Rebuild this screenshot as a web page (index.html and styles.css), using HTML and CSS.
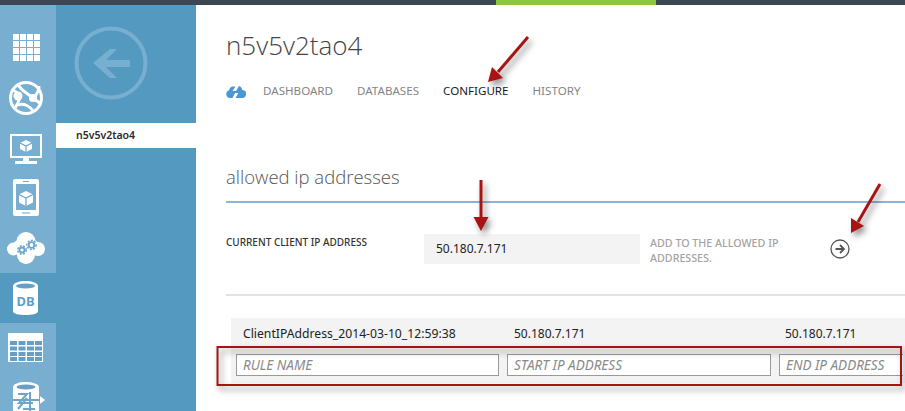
FILE: index.html
```html
<!DOCTYPE html>
<html lang="en">
<head>
<meta charset="utf-8">
<title>n5v5v2tao4 - Configure</title>
<link rel="stylesheet" href="styles.css">
</head>
<body>
<div class="topbar"><div class="topbar-accent"></div></div>
<div class="shell">
  <nav class="rail">
    <div class="rail-item">
      <svg class="rail-icon" viewBox="0 0 56 50"><path class="w" d="M13 12h6v6h-6zM20 12h6v6h-6zM27 12h6v6h-6zM34 12h6v6h-6zM13 19h6v6h-6zM20 19h6v6h-6zM27 19h6v6h-6zM34 19h6v6h-6zM13 26h6v6h-6zM20 26h6v6h-6zM27 26h6v6h-6zM34 26h6v6h-6zM13 33h6v6h-6zM20 33h6v6h-6zM27 33h6v6h-6zM34 33h6v6h-6z"/></svg>
    </div>
    <div class="rail-item">
      <svg class="rail-icon" viewBox="0 0 56 50"><circle class="s" cx="26" cy="26" r="15.500" stroke-width="3"/><path class="s" stroke-width="3" d="M18 12c2 6 9 9 15 14l8 6M13 18c6 3 7 6 6 10s-3 6-4 8M18 33c6-2 12 1 16 7M34 26c3-4 5-7 5-12"/><circle class="w" cx="18" cy="24" r="4.500"/><circle class="w" cx="33" cy="26" r="4"/></svg>
    </div>
    <div class="rail-item">
      <svg class="rail-icon" viewBox="0 0 56 50"><rect class="s" x="11" y="13" width="30" height="22" stroke-width="2"/><path class="w" d="M23 36h6v3h8v3H15v-3h8z"/><path class="w" d="M26 18l6 3v6l-6 3-6-3v-6z"/><path class="s-blue" d="M20 21l6 3 6-3M26 24v6"/></svg>
    </div>
    <div class="rail-item">
      <svg class="rail-icon" viewBox="0 0 56 50"><path class="w" fill-rule="evenodd" d="M15 7h22a2 2 0 0 1 2 2v33a2 2 0 0 1-2 2H15a2 2 0 0 1-2-2V9a2 2 0 0 1 2-2zM16 12v26h20V12z"/><path class="w" d="M26 19l7 3.500v8l-7 3.500-7-3.500v-8z"/><path class="s-blue" d="M19 22.500l7 3.500 7-3.500M26 26v8M22 41h8M23 9.500h6"/></svg>
    </div>
    <div class="rail-item">
      <svg class="rail-icon" viewBox="0 0 56 50"><circle class="w" cx="13.500" cy="27" r="6.500"/><circle class="w" cx="26" cy="19.500" r="9.500"/><circle class="w" cx="38" cy="27" r="7"/><circle class="w" cx="26" cy="33" r="9"/><circle class="w" cx="19" cy="24" r="6"/><circle class="w" cx="33" cy="24" r="6"/><circle class="gear-ring" cx="22" cy="28" r="2.500"/><circle class="gear" cx="22" cy="28" r="4.200"/><circle class="gear-ring" cx="31.500" cy="23" r="2.800"/><circle class="gear" cx="31.500" cy="23" r="4.600"/></svg>
    </div>
    <div class="rail-item rail-item-active">
      <svg class="rail-icon" viewBox="0 0 56 50"><path class="w" d="M13 13c0-3 6-5 12.500-5S38 10 38 13v25c0 3-6 4-12.500 4S13 41 13 38z"/><ellipse class="b" cx="25.500" cy="13" rx="9.500" ry="2.500"/><text class="db" x="25.500" y="33">DB</text></svg>
    </div>
    <div class="rail-item">
      <svg class="rail-icon" viewBox="0 0 56 50"><path class="w" d="M8 10h35v29H8z"/><path class="b" d="M10 18h7v4h-7zM18.500 18h7v4h-7zM27 18h7v4h-7zM35 18h7v4h-7zM10 23.500h7v4h-7zM18.500 23.500h7v4h-7zM27 23.500h7v4h-7zM35 23.500h7v4h-7zM10 29h7v4h-7zM18.500 29h7v4h-7zM27 29h7v4h-7zM35 29h7v4h-7zM10 34h7v4h-7zM18.500 34h7v4h-7zM27 34h7v4h-7zM35 34h7v4h-7z"/></svg>
    </div>
    <div class="rail-item">
      <svg class="rail-icon" viewBox="0 0 56 50"><path class="w" d="M13 14c0-3 6-5 12.500-5S39 11 39 14v28H13z"/><ellipse class="b" cx="26" cy="14" rx="9.500" ry="2.500"/><path class="s-blue s-thick" d="M13 27h29M18 21h9l-8 9h14M18 36l9-11M30 19v23M23 36h12"/><path class="w" d="M40 23l5 4-5 4z"/></svg>
    </div>
  </nav>

  <aside class="subnav">
    <div class="back">
      <svg class="back-icon" viewBox="0 0 76 76"><circle cx="38" cy="38" r="34.500" fill="none" stroke-width="4"/><path class="back-arrow" d="M20 38L37 24h7L33 35h24v7H33l11 11h-7z"/></svg>
    </div>
    <div class="subnav-item">n5v5v2tao4</div>
  </aside>

  <main class="content">
    <h1 class="title">n5v5v2tao4</h1>
    <div class="tabs">
      <svg class="tab-icon" viewBox="0 0 20 13"><path d="M4 13a4 4 0 0 1-1-7.800C3.500 3 5 1.500 7 1.500h2.500L6.500 6H10l-3.500 7zM9.500 13l3-5H9l4-7c2 .5 3 2 3.200 4A4 4 0 0 1 16 13z"/></svg>
      <span class="tab">DASHBOARD</span>
      <span class="tab">DATABASES</span>
      <span class="tab tab-active">CONFIGURE</span>
      <span class="tab">HISTORY</span>
    </div>

    <h2 class="section">allowed ip addresses</h2>

    <div class="client-row">
      <div class="client-label">CURRENT CLIENT IP ADDRESS</div>
      <div class="client-ip">50.180.7.171</div>
      <div class="client-note">ADD TO THE ALLOWED IP ADDRESSES.</div>
      <svg class="add-icon" viewBox="0 0 20 20"><circle cx="10" cy="10" r="9" fill="none" stroke-width="1.300"/><path d="M5.500 10h8M10 6l4 4-4 4" fill="none" stroke-width="1.800"/></svg>
    </div>

    <div class="rules">
      <div class="rule-row">
        <span class="cell-name">ClientIPAddress_2014-03-10_12:59:38</span>
        <span class="cell-start">50.180.7.171</span>
        <span class="cell-end">50.180.7.171</span>
      </div>
      <div class="rule-inputs">
        <div class="field field-name">RULE NAME</div>
        <div class="field field-start">START IP ADDRESS</div>
        <div class="field field-end">END IP ADDRESS</div>
      </div>
    </div>
  </main>
</div>

<svg class="marks" viewBox="0 0 905 411">
  <g class="mark-group">
    <rect class="mark-box" x="217.500" y="347" width="683.500" height="38"/>
    <path class="mark-line" d="M528 37L498 72"/>
    <path class="mark-fill" d="M488 82L492 67L503 78z"/>
    <path class="mark-line" d="M481 180V220"/>
    <path class="mark-fill" d="M481 231L473.500 217H488.500z"/>
    <path class="mark-line" d="M880 184L858 222"/>
    <path class="mark-fill" d="M851 233L851 218L864 226z"/>
  </g>
</svg>
</body>
</html>
```
FILE: styles.css
```css
* { box-sizing: border-box; margin: 0; padding: 0; }
html, body { width: 905px; height: 411px; overflow: hidden; }
body {
  position: relative;
  background: #fff;
  font-family: "Noto Sans", "Open Sans", "Liberation Sans", sans-serif;
  color: #222;
  display: flex;
  flex-direction: column;
}
.topbar { height: 5px; background: #3d4753; flex: none; padding-left: 496px; }
.topbar-accent { width: 160px; height: 5px; background: #8cc63f; }
.shell { display: flex; flex: 1; min-height: 0; }

.rail { width: 56px; flex: none; background: #78afd1; padding-top: 17px; overflow: hidden; }
.rail-item { height: 50px; }
.rail-item-active { background: #5499bf; margin-top: 1px; }
.rail-icon { display: block; width: 56px; height: 50px; }
.w { fill: #fff; }
.b { fill: #669fc5; }
.s { fill: none; stroke: #fff; }
.s-blue { fill: none; stroke: #6ca6ca; stroke-width: 1.200; }
.s-thick { stroke-width: 2; }
.gear { fill: none; stroke: #6ca6ca; stroke-width: 1.500; stroke-dasharray: 2 1.400; }
.gear-ring { fill: none; stroke: #6ca6ca; stroke-width: 1.800; }
.db { fill: #5f9fc6; font-size: 13px; font-weight: 700; text-anchor: middle; font-family: "Noto Sans", sans-serif; }

.subnav { width: 140px; flex: none; background: #5499bf; }
.back { height: 118px; padding: 20px 0 0 17px; }
.back-icon { display: block; width: 76px; height: 76px; stroke: #77afd0; }
.back-arrow { fill: #77afd0; stroke: none; }
.subnav-item {
  height: 25px;
  background: #fff;
  padding-left: 20px;
  font-size: 10.500px;
  font-weight: 600;
  line-height: 25px;
  color: #2b2b2b;
}

.content { flex: 1; min-width: 0; padding: 0 0 0 30px; overflow: hidden; }
.title { font-size: 26px; font-weight: 300; line-height: 36px; margin-top: 22px; color: #444; font-family: "Open Sans", "Noto Sans", sans-serif; }
.tabs { display: flex; align-items: center; margin-top: 18px; height: 20px; }
.tab-icon { width: 20px; height: 13px; fill: #4a97d6; margin-right: 17px; flex: none; }
.tab { font-size: 11.600px; color: #858585; margin-right: 24px; line-height: 20px; }
.tab-active { color: #1a1a1a; }
.section { font-size: 18.500px; font-weight: 300; line-height: 28px; margin-top: 62px; padding-bottom: 10px; border-bottom: 2px solid #8fb4da; color: #555; font-family: "Open Sans", "Noto Sans", sans-serif; height: 40px; }

.client-row { display: flex; margin-top: 31px; height: 62px; border-bottom: 2px solid #e2e2e2; align-items: flex-start; }
.client-label { width: 198px; font-size: 10px; font-weight: 500; line-height: 16px; color: #333; }
.client-ip { width: 216px; height: 30px; background: #f3f3f3; font-size: 12px; line-height: 30px; padding-left: 12px; color: #222; }
.client-note { width: 140px; margin-left: 10px; padding-top: 2px; font-size: 10.700px; line-height: 15px; color: #a3a3a3; font-weight: 500; }
.add-icon { width: 20px; height: 20px; margin: 5px 0 0 40px; stroke: #555; flex: none; }

.rules { margin: 22px 0 0 5px; height: 65px; background: #f3f3f3; }
.rule-row { display: flex; height: 36px; line-height: 32px; font-size: 12px; padding-left: 12px; color: #222; }
.cell-name { width: 271px; font-size: 12.200px; }
.cell-start { width: 271px; }
.rule-inputs { display: flex; gap: 8px; margin-left: 5px; }
.field { height: 22px; background: #fff; border: 1px solid #9a9a9a; font-style: italic; font-size: 13.500px; line-height: 20px; color: #8a8a8a; padding-left: 6px; white-space: nowrap; flex: none; }
.field-name { width: 263px; }
.field-start { width: 264px; }
.field-end { width: 124px; border-right: 0; }

.marks { position: absolute; left: 0; top: 0; width: 905px; height: 411px; pointer-events: none; }
.mark-group { filter: drop-shadow(3px 4px 3px rgba(0,0,0,.45)); }
.mark-box { fill: none; stroke: #a31515; stroke-width: 2; }
.mark-line { fill: none; stroke: #a81414; stroke-width: 3; }
.mark-fill { fill: #a81414; }
```
